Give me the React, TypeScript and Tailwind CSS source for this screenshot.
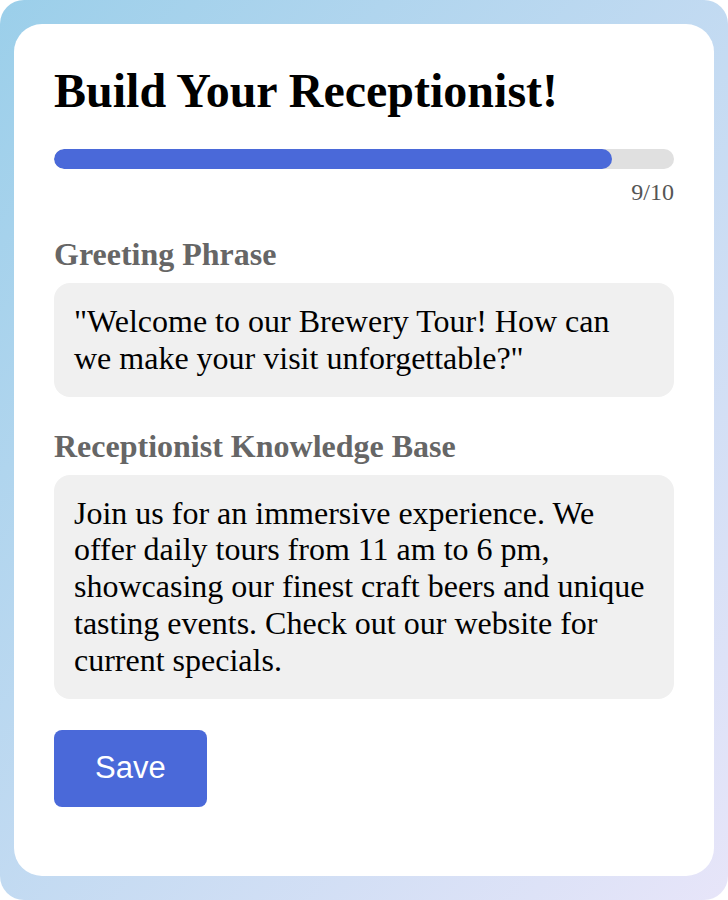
export default function App() {
  const step = 9
  const total = 10

  return (
    <div className="h-[900px] w-full rounded-[24px] bg-gradient-to-br from-[#9bcfea] to-[#e7e5f9] px-[14px] py-[24px]">
      <div className="h-full rounded-[28px] bg-white p-10 font-['Liberation_Serif','Times_New_Roman',serif]">
        <h1 className="mt-[3px] text-[48px] font-bold leading-none text-black">Build Your Receptionist!</h1>

        <div className="mt-[34px] h-5 w-full overflow-hidden rounded-full bg-[#e0e0e0]">
          <div className="h-full rounded-full bg-[#4a69d9]" style={{ width: `${(step / total) * 100}%` }} />
        </div>
        <div className="mt-[11px] text-right text-[24px] leading-none text-[#555]">
          {step}/{total}
        </div>

        <label className="mt-[34px] block text-[32px] font-bold leading-none text-[#666]">Greeting Phrase</label>
        <div className="mt-[13px] rounded-2xl bg-[#f0f0f0] p-5 text-[32px] leading-[1.15] text-black">
          "Welcome to our Brewery Tour! How can we make your visit unforgettable?"
        </div>

        <label className="mt-[33px] block text-[32px] font-bold leading-none text-[#666]">
          Receptionist Knowledge Base
        </label>
        <div className="mt-[13px] rounded-2xl bg-[#f0f0f0] p-5 text-[32px] leading-[1.15] text-black">
          Join us for an immersive experience. We offer daily tours from 11 am to 6 pm, showcasing our finest craft
          beers and unique tasting events. Check out our website for current specials.
        </div>

        <button className="mt-[31px] h-[77px] rounded-lg bg-[#4a69d9] px-[41px] font-['Liberation_Sans',Arial,sans-serif] text-[31px] text-white">
          Save
        </button>
      </div>
    </div>
  )
}
